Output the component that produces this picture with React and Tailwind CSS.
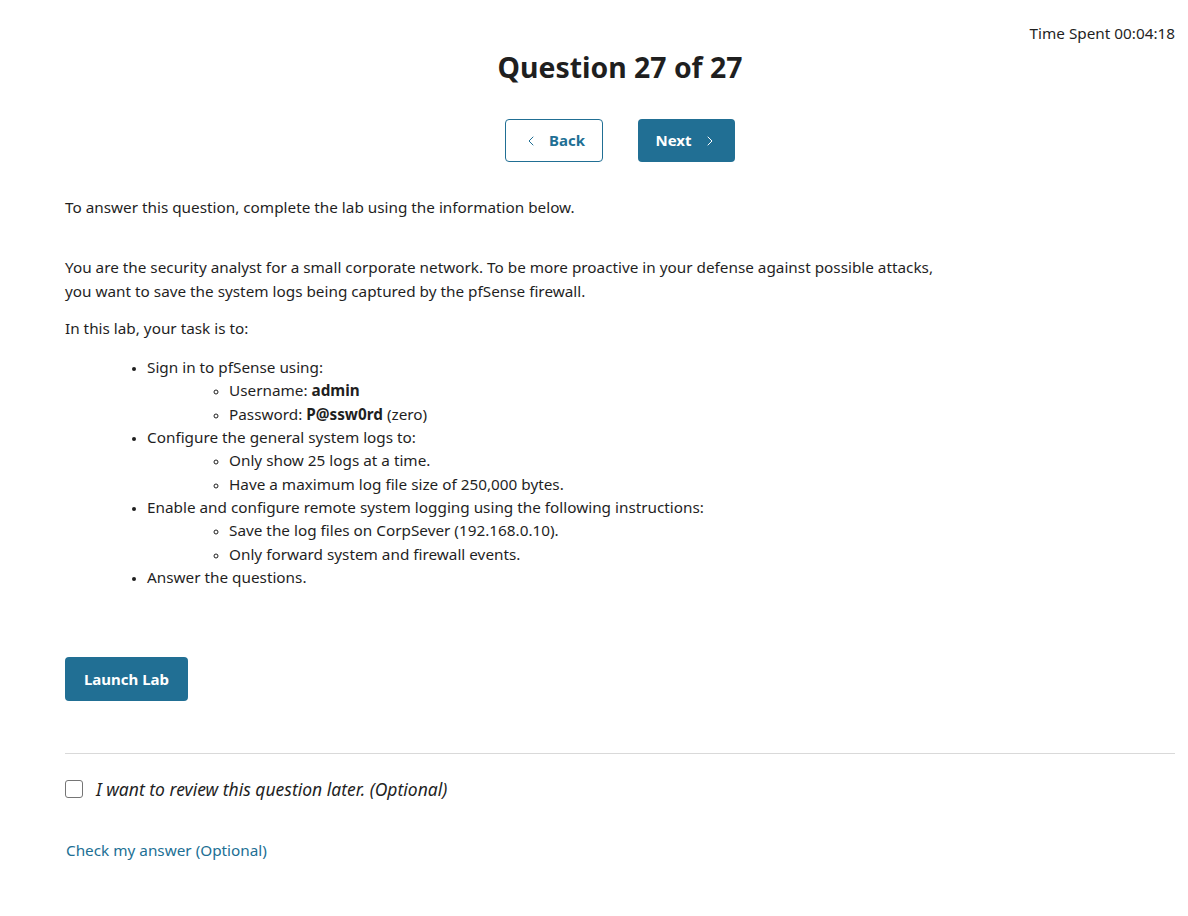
import { ChevronLeft, ChevronRight } from 'lucide-react';

function Item({ children, sub }) {
  return (
    <li>
      {children}
      {sub && (
        <ul className="list-[circle] pl-[82px] marker:text-[12px]">
          {sub.map((s, i) => (
            <li key={i}>{s}</li>
          ))}
        </ul>
      )}
    </li>
  );
}

export default function App() {
  return (
    <div className="min-h-screen bg-white text-[#1f1f1f] font-['Noto_Sans','Open_Sans',sans-serif] pl-[65px] pr-[13px] pt-[23px]">
      <div className="flex justify-end text-[15.3px] leading-5">Time Spent 00:04:18</div>
      <h1 className="text-center text-[28.4px] font-bold leading-[36px] mt-[6px]">Question 27 of 27</h1>

      <div className="flex justify-center gap-[35px] mt-[34px]">
        <button className="w-[98px] h-[43px] rounded border border-[#216f94] text-[#216f94] font-bold text-[15px] flex items-center justify-center gap-[10px]">
          <ChevronLeft size={16} strokeWidth={1.5} />
          Back
        </button>
        <button className="w-[97px] h-[43px] rounded bg-[#216f94] text-white font-bold text-[15px] flex items-center justify-center gap-[10px]">
          Next
          <ChevronRight size={16} strokeWidth={1.5} />
        </button>
      </div>

      <div className="text-[15.3px] leading-[23.3px] mt-[34px]">
        <p>To answer this question, complete the lab using the information below.</p>
        <p className="mt-[37px]">
          You are the security analyst for a small corporate network. To be more proactive in your defense against possible attacks,
          <br />
          you want to save the system logs being captured by the pfSense firewall.
        </p>
        <p className="mt-[14px]">In this lab, your task is to:</p>
        <ul className="list-disc pl-[82px] mt-[16px] marker:text-[12px]">
          <Item
            sub={[
              <>Username: <b>admin</b></>,
              <>Password: <b>P@ssw0rd</b> (zero)</>,
            ]}
          >
            Sign in to pfSense using:
          </Item>
          <Item sub={['Only show 25 logs at a time.', 'Have a maximum log file size of 250,000 bytes.']}>
            Configure the general system logs to:
          </Item>
          <Item sub={['Save the log files on CorpSever (192.168.0.10).', 'Only forward system and firewall events.']}>
            Enable and configure remote system logging using the following instructions:
          </Item>
          <Item>Answer the questions.</Item>
        </ul>
      </div>

      <button className="mt-[68px] w-[123px] h-[44px] rounded bg-[#216f94] text-white font-bold text-[15px]">
        Launch Lab
      </button>

      <div className="border-t border-[#d9d9d9] mt-[52px]" />

      <label className="flex items-center gap-[13px] mt-[22px]">
        <span className="w-[18px] h-[18px] rounded-[3px] border border-[#757575] bg-white" />
        <span className="italic text-[17.5px]">I want to review this question later. (Optional)</span>
      </label>

      <a className="block mt-[37px] text-[15.3px] text-[#216f94] ml-px">Check my answer (Optional)</a>
    </div>
  );
}
